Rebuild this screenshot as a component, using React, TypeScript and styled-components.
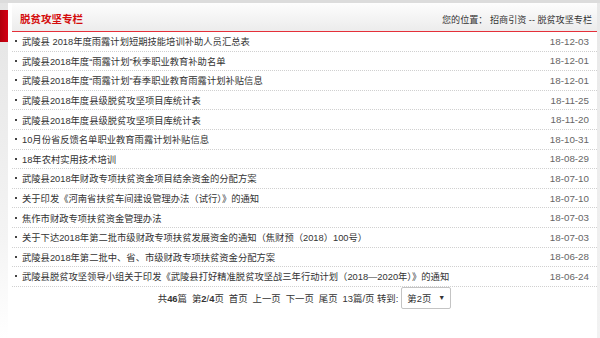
import React, { FC } from 'react';
import styled, { createGlobalStyle } from 'styled-components';

const GlobalStyle = createGlobalStyle`
    html, body {
        margin: 0;
        padding: 0;
        background: #fff;
    }
    body {
        font-family: "Liberation Sans", "Noto Sans CJK SC", sans-serif;
        color: #333;
    }
`;

const Page = styled.div`
    width: 600px;
    height: 338px;
    overflow: hidden;
    display: flex;
    flex-direction: column;
`;

const TopBand = styled.div`
    height: 3px;
    background: #dcdcdc;
`;

const Body = styled.div`
    flex: 1;
    display: flex;
`;

const Side = styled.div`
    width: 8px;
    margin-right: 4px;
    background: linear-gradient(#e4e4e4, #f4f4f4 70%, #fff);
    padding-top: 7px;
`;

const SideBlock = styled.div`
    height: 32px;
    background: linear-gradient(90deg, #b0000c, #d40014);
`;

const Main = styled.div`
    flex: 1;
    display: flex;
    flex-direction: column;
`;

const RightEdge = styled.div`
    width: 3px;
    background: linear-gradient(#e8e8e8, #f2f2f2);
`;

const Header = styled.div`
    height: 28px;
    display: flex;
    align-items: center;
    justify-content: space-between;
    padding: 0 5px 0 8px;
    background: linear-gradient(#fdfdfd, #ececec);
    border-bottom: 1.5px solid #e5303a;
`;

const Title = styled.div`
    font-family: "Noto Sans CJK SC", serif;
    font-size: 10.5px;
    font-weight: 700;
    color: #d40c0c;
    padding-top: 2px;
`;

const Crumb = styled.div`
    font-size: 9.1px;
    color: #333;
    padding-top: 4px;
`;

const List = styled.ul`
    list-style: none;
    margin: 0;
    padding: 0;
`;

const Row = styled.li`
    height: 18.6px;
    display: flex;
    align-items: center;
    justify-content: space-between;
    padding: 0 8px 0 3px;
    border-bottom: 1px dotted #d0d0d0;
    font-size: 9.3px;
`;

const Label = styled.span`
    display: flex;
    align-items: center;
    color: #333;
    white-space: nowrap;

    &::before {
        content: '';
        width: 2px;
        height: 2px;
        background: #444;
        margin-right: 5px;
    }
`;

const Date = styled.span`
    font-size: 9.8px;
    color: #666;
`;

const Pager = styled.div`
    height: 22px;
    display: flex;
    align-items: center;
    justify-content: center;
    gap: 5px;
    font-size: 9.4px;
    color: #333;
`;

const Select = styled.div`
    height: 20px;
    padding: 0 5px;
    display: flex;
    align-items: center;
    gap: 7px;
    border: 1px solid #c4c4c4;
    border-radius: 2px;
    background: #fff;
    margin-left: -2px;
`;

const Arrow = styled.span`
    font-size: 7px;
`;

const items: [string, string][] = [
    ['武陵县 2018年度雨露计划短期技能培训补助人员汇总表', '18-12-03'],
    ['武陵县2018年度“雨露计划”秋季职业教育补助名单', '18-12-01'],
    ['武陵县2018年度“雨露计划”春季职业教育雨露计划补贴信息', '18-12-01'],
    ['武陵县2018年度县级脱贫攻坚项目库统计表', '18-11-25'],
    ['武陵县2018年度县级脱贫攻坚项目库统计表', '18-11-20'],
    ['10月份省反馈名单职业教育雨露计划补贴信息', '18-10-31'],
    ['18年农村实用技术培训', '18-08-29'],
    ['武陵县2018年财政专项扶贫资金项目结余资金的分配方案', '18-07-10'],
    ['关于印发《河南省扶贫车间建设管理办法（试行）》的通知', '18-07-10'],
    ['焦作市财政专项扶贫资金管理办法', '18-07-03'],
    ['关于下达2018年第二批市级财政专项扶贫发展资金的通知（焦财预（2018）100号）', '18-07-03'],
    ['武陵县2018年第二批中、省、市级财政专项扶贫资金分配方案', '18-06-28'],
    ['武陵县脱贫攻坚领导小组关于印发《武陵县打好精准脱贫攻坚战三年行动计划（2018—2020年）》的通知', '18-06-24'],
];

const App: FC = () => {
    return (
        <Page>
            <GlobalStyle />
            <TopBand />
            <Body>
                <Side>
                    <SideBlock />
                </Side>
                <Main>
                    <Header>
                        <Title>脱贫攻坚专栏</Title>
                        <Crumb>您的位置： 招商引资 -- 脱贫攻坚专栏</Crumb>
                    </Header>
                    <List>
                        {items.map(([text, date], i) => (
                            <Row key={i}>
                                <Label>{text}</Label>
                                <Date>{date}</Date>
                            </Row>
                        ))}
                    </List>
                    <Pager>
                        <span>
                            共<b>46</b>篇
                        </span>
                        <span>
                            第<b>2</b>/<b>4</b>页
                        </span>
                        <span>首页</span>
                        <span>上一页</span>
                        <span>下一页</span>
                        <span>尾页</span>
                        <span>13篇/页 转到:</span>
                        <Select>
                            第2页 <Arrow>▼</Arrow>
                        </Select>
                    </Pager>
                </Main>
                <RightEdge />
            </Body>
        </Page>
    );
};

export default App;
